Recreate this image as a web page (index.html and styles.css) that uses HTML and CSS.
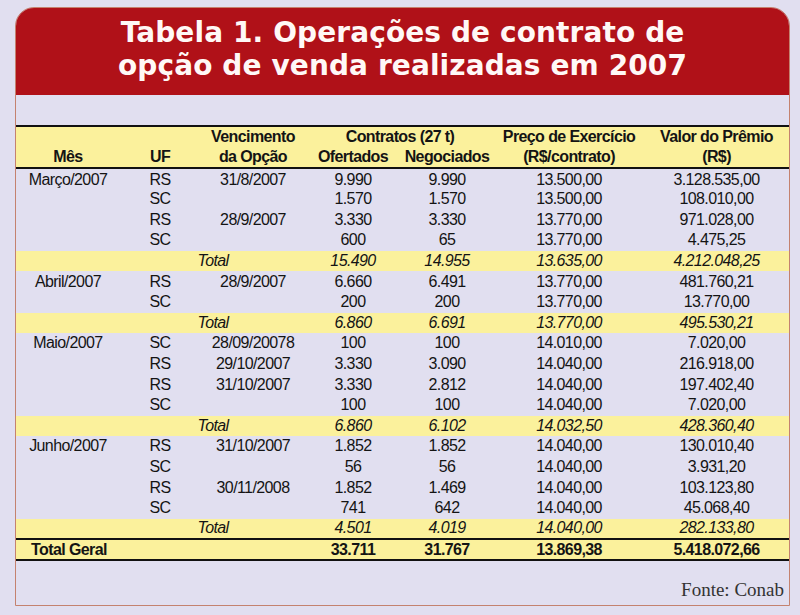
FILE: index.html
```html
<!DOCTYPE html>
<html lang="pt">
<head>
<meta charset="utf-8">
<link rel="stylesheet" href="styles.css">
</head>
<body>
<div class="panel">
  <div class="title">Tabela 1. Operações de contrato de<br>opção de venda realizadas em 2007</div>
  <table class="data">
    <colgroup>
      <col class="c-mes"><col class="c-uf"><col class="c-venc"><col class="c-of"><col class="c-neg"><col class="c-preco"><col class="c-valor">
    </colgroup>
    <thead>
      <tr class="h1"><th></th><th></th><th>Vencimento</th><th colspan="2">Contratos (27 t)</th><th>Preço de Exercício</th><th>Valor do Prêmio</th></tr>
      <tr class="h2"><th>Mês</th><th>UF</th><th>da Opção</th><th>Ofertados</th><th>Negociados</th><th>(R$/contrato)</th><th>(R$)</th></tr>
    </thead>
    <tbody>
      <tr><td>Março/2007</td><td>RS</td><td>31/8/2007</td><td>9.990</td><td>9.990</td><td>13.500,00</td><td>3.128.535,00</td></tr>
      <tr><td></td><td>SC</td><td></td><td>1.570</td><td>1.570</td><td>13.500,00</td><td>108.010,00</td></tr>
      <tr><td></td><td>RS</td><td>28/9/2007</td><td>3.330</td><td>3.330</td><td>13.770,00</td><td>971.028,00</td></tr>
      <tr><td></td><td>SC</td><td></td><td>600</td><td>65</td><td>13.770,00</td><td>4.475,25</td></tr>
      <tr class="total"><td></td><td colspan="2">Total</td><td>15.490</td><td>14.955</td><td>13.635,00</td><td>4.212.048,25</td></tr>
      <tr><td>Abril/2007</td><td>RS</td><td>28/9/2007</td><td>6.660</td><td>6.491</td><td>13.770,00</td><td>481.760,21</td></tr>
      <tr><td></td><td>SC</td><td></td><td>200</td><td>200</td><td>13.770,00</td><td>13.770,00</td></tr>
      <tr class="total"><td></td><td colspan="2">Total</td><td>6.860</td><td>6.691</td><td>13.770,00</td><td>495.530,21</td></tr>
      <tr><td>Maio/2007</td><td>SC</td><td>28/09/20078</td><td>100</td><td>100</td><td>14.010,00</td><td>7.020,00</td></tr>
      <tr><td></td><td>RS</td><td>29/10/2007</td><td>3.330</td><td>3.090</td><td>14.040,00</td><td>216.918,00</td></tr>
      <tr><td></td><td>RS</td><td>31/10/2007</td><td>3.330</td><td>2.812</td><td>14.040,00</td><td>197.402,40</td></tr>
      <tr><td></td><td>SC</td><td></td><td>100</td><td>100</td><td>14.040,00</td><td>7.020,00</td></tr>
      <tr class="total"><td></td><td colspan="2">Total</td><td>6.860</td><td>6.102</td><td>14.032,50</td><td>428.360,40</td></tr>
      <tr><td>Junho/2007</td><td>RS</td><td>31/10/2007</td><td>1.852</td><td>1.852</td><td>14.040,00</td><td>130.010,40</td></tr>
      <tr><td></td><td>SC</td><td></td><td>56</td><td>56</td><td>14.040,00</td><td>3.931,20</td></tr>
      <tr><td></td><td>RS</td><td>30/11/2008</td><td>1.852</td><td>1.469</td><td>14.040,00</td><td>103.123,80</td></tr>
      <tr><td></td><td>SC</td><td></td><td>741</td><td>642</td><td>14.040,00</td><td>45.068,40</td></tr>
      <tr class="total"><td></td><td colspan="2">Total</td><td>4.501</td><td>4.019</td><td>14.040,00</td><td>282.133,80</td></tr>
    </tbody>
    <tfoot>
      <tr class="geral"><td colspan="3" class="geral-label">Total Geral</td><td>33.711</td><td>31.767</td><td>13.869,38</td><td>5.418.072,66</td></tr>
    </tfoot>
  </table>
  <div class="source">Fonte: Conab</div>
</div>
</body>
</html>
```

FILE: styles.css
```css
html, body {
  margin: 0;
  padding: 0;
  background: #e1dff0;
}
body {
  width: 800px;
  height: 615px;
  overflow: hidden;
}
.panel {
  box-sizing: border-box;
  margin: 7px 0 0 15px;
  width: 775px;
  height: 599px;
  border: 1px solid #c4826f;
  border-radius: 19px 19px 0 0;
  overflow: hidden;
  background: #e1dff0;
  display: flex;
  flex-direction: column;
}
.title {
  height: 87px;
  box-sizing: border-box;
  padding-top: 8px;
  background: #b01118;
  color: #fff8f6;
  font-family: "DejaVu Sans", Verdana, sans-serif;
  font-weight: bold;
  font-size: 28px;
  line-height: 33px;
  text-align: center;
  letter-spacing: 0.1px;
}
.data {
  margin-top: 30px;
  width: 773px;
  table-layout: fixed;
  border-collapse: collapse;
  font-family: "Liberation Sans", Arial, sans-serif;
  font-size: 16px;
  letter-spacing: -0.6px;
  color: #141414;
}
.c-mes { width: 104px; }
.c-uf { width: 80px; }
.c-venc { width: 106px; }
.c-of { width: 94px; }
.c-neg { width: 94px; }
.c-preco { width: 150px; }
.c-valor { width: 145px; }
.data th, .data td {
  padding: 0;
  text-align: center;
  white-space: nowrap;
  line-height: 18px;
}
.data thead {
  background: #fbf19c;
  border-top: 2px solid #111;
  border-bottom: 2px solid #111;
}
.data thead tr { height: 21px; }
.data tr.h2 th { padding-bottom: 1px; }
.data th { font-weight: bold; }
.data tbody tr { height: 20.6px; }
.data tbody tr:first-child td { padding-top: 2px; }
.data tr.total {
  background: #fbf19c;
  font-style: italic;
}
.data tfoot tr.geral {
  height: 21px;
  background: #fbf19c;
  font-weight: bold;
  border-top: 2px solid #111;
  border-bottom: 2px solid #111;
}
.data td.geral-label {
  text-align: left;
  padding-left: 15px;
}
.source {
  margin-top: auto;
  padding: 0 5px 5px 0;
  text-align: right;
  font-family: "Liberation Serif", "Times New Roman", serif;
  font-size: 19px;
  line-height: 20px;
  color: #333;
}
```
